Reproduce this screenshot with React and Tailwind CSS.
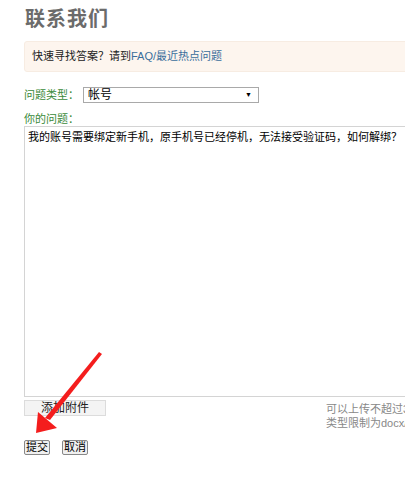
import React from 'react';

const cjk = { fontFamily: '"Liberation Sans", "Noto Sans CJK SC", sans-serif' };

function Arrow() {
  return (
    <svg className="absolute left-0 top-0 pointer-events-none" width="405" height="478">
      <polygon points="99,352 102,354 50,420 45,418" fill="#f41d1d" />
      <polygon points="36,433 38,412 57,428" fill="#f41d1d" />
    </svg>
  );
}

export default function App() {
  return (
    <div className="relative w-[405px] h-[478px] overflow-hidden bg-white" style={cjk}>
      <div className="w-[600px] pl-[24px] pt-[7px]">
        <h1 className="text-[20px] leading-[24px] font-bold text-[#6b6b6b] ml-[1px] tracking-[1px]">联系我们</h1>

        <div className="mt-[10px] h-[31px] bg-[#fdf5ee] border border-[#f7ece2] rounded-[3px] flex items-center pl-[7px] text-[11px] text-[#222]">
          快速寻找答案？请到<span className="text-[#3a6e9c]">FAQ/最近热点问题</span>
        </div>

        <div className="mt-[15px] flex items-center h-[16px]">
          <span className="shrink-0 whitespace-nowrap text-[11px] text-[#3a8a3a] w-[59px]">问题类型：</span>
          <div className="shrink-0 w-[176px] h-[16px] border border-[#a9a9a9] flex items-center justify-between pl-[4px] pr-[6px] text-[12px] text-black">
            <span>帐号</span>
            <span className="text-[7px]">▼</span>
          </div>
        </div>

        <div className="mt-[9px] text-[11px] leading-[14px] text-[#3a8a3a]">你的问题：</div>
        <div className="w-[500px] h-[271px] border border-[#d4d4d4] px-[3px] pt-[2px] text-[11px] leading-[16px] text-black whitespace-nowrap">
          我的账号需要绑定新手机，原手机号已经停机，无法接受验证码，如何解绑？
        </div>

        <div className="mt-[3px] flex">
          <div className="w-[82px] h-[16px] bg-[#f4f4f4] border border-[#dcdcdc] text-[12px] leading-[14px] text-center text-[#222]">添加附件</div>
          <div className="ml-[220px] mt-[2px] text-[11px] leading-[14px] text-[#888] whitespace-nowrap">
            <div>可以上传不超过3个附件</div>
            <div>类型限制为docx/doc</div>
          </div>
        </div>

        <div className="mt-[10px] flex gap-[12px]">
          <div className="h-[15px] px-[1px] bg-[#f0f0f0] border border-[#888] rounded-[2px] text-[11px] leading-[13px] text-black">提交</div>
          <div className="h-[15px] px-[1px] bg-[#f0f0f0] border border-[#888] rounded-[2px] text-[11px] leading-[13px] text-black">取消</div>
        </div>
      </div>
      <Arrow />
    </div>
  );
}
